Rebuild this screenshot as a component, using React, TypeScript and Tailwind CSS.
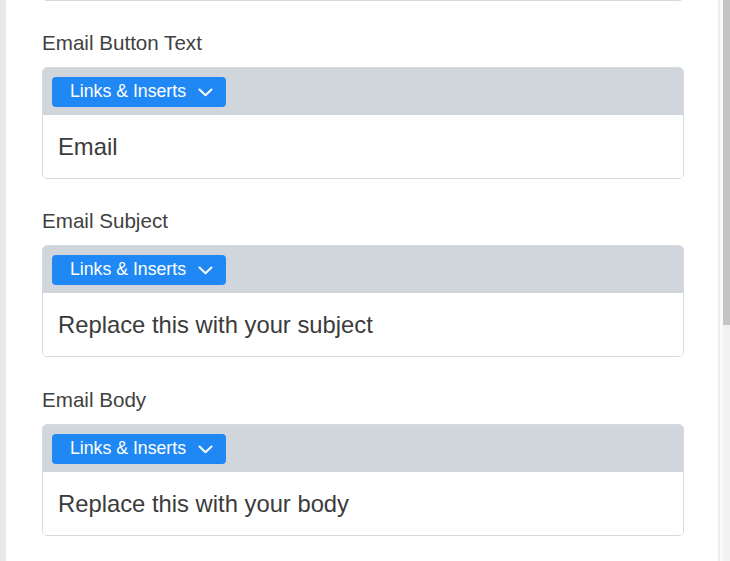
import React from "react";

function Chevron() {
  return (
    <svg width="15" height="9" viewBox="0 0 15 9" fill="none" className="ml-[12px]">
      <path d="M1.5 1.5 L7.5 7.2 L13.5 1.5" stroke="white" strokeWidth="2" strokeLinecap="round" strokeLinejoin="round" />
    </svg>
  );
}

function Field({ label, value }: { label: string; value: string }) {
  return (
    <div className="mt-[30px]">
      <div className="text-[20.6px] leading-[24px] text-[#414141]">{label}</div>
      <div className="mt-[12px] border border-[#d6d9dd] rounded-[5px] overflow-hidden">
        <div className="bg-[#d1d5dc] h-[47px] pt-[9px] pl-[9px]">
          <button className="h-[30px] flex items-center rounded-[4px] bg-[#2088f4] pl-[18px] pr-[13px] text-white text-[17.7px] leading-none">
            <span>Links &amp; Inserts</span>
            <Chevron />
          </button>
        </div>
        <div className="bg-white h-[63px] flex items-center pl-[15px] text-[23.8px] text-[#3b3b3b]">
          {value}
        </div>
      </div>
    </div>
  );
}

export default function App() {
  return (
    <div
      className="w-[730px] h-[561px] overflow-hidden flex bg-white"
      style={{ fontFamily: '"Liberation Sans", Arial, sans-serif' }}
    >
      <div className="w-[6px] h-full bg-[#e8e8e8]" />
      <div className="flex-1 flex flex-col pl-[36px] pr-[34px]">
        <div className="h-[8px] -mt-[7px] border-x border-b border-[#d6d9dd] rounded-b-[5px]" />
        <Field label="Email Button Text" value="Email" />
        <Field label="Email Subject" value="Replace this with your subject" />
        <div className="pt-[1px]">
          <Field label="Email Body" value="Replace this with your body" />
        </div>
      </div>
      <div className="w-[12px] h-full flex bg-[#f1f1f1] border-l-2 border-[#ececec]">
        <div className="w-[3px] h-full bg-[#fafafa]" />
        <div className="flex-1 flex flex-col">
          <div className="h-[325px] bg-[#c4c4c4]" />
        </div>
      </div>
    </div>
  );
}
